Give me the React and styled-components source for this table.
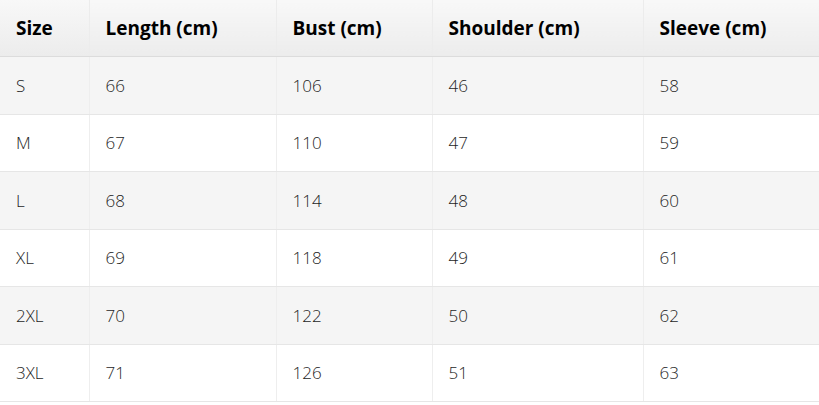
import styled, { createGlobalStyle } from "styled-components";

const GlobalStyle = createGlobalStyle`
	body {
		margin: 0;
		background: #fff;
		font-family: "Open Sans", "Noto Sans", sans-serif;
	}
`;

const Table = styled.table`
	width: 819px;
	border-collapse: collapse;
	table-layout: fixed;
`;

const HeadCell = styled.th`
	height: 56px;
	padding: 0 16px;
	text-align: left;
	font-size: 19px;
	font-weight: 700;
	color: #000;
	background: linear-gradient(to bottom, #f8f8f8, #ececec);
	border-bottom: 1px solid #dcdcdc;
	border-left: 1px solid #ececec;

	&:first-child {
		border-left: none;
	}
`;

const Row = styled.tr`
	background: ${(props) => (props.$striped ? "#f5f5f5" : "#fff")};
`;

const Cell = styled.td`
	height: 56.5px;
	padding: 0 16px;
	font-size: 17px;
	font-weight: 300;
	color: #1e1e1e;
	border-bottom: 1px solid #e6e6e6;
	border-left: 1px solid #eeeeee;

	&:first-child {
		border-left: none;
	}
`;

const columns = [
	{ label: "Size", width: 89 },
	{ label: "Length (cm)", width: 187 },
	{ label: "Bust (cm)", width: 156 },
	{ label: "Shoulder (cm)", width: 211 },
	{ label: "Sleeve (cm)", width: 176 },
];

const rows = [
	["S", 66, 106, 46, 58],
	["M", 67, 110, 47, 59],
	["L", 68, 114, 48, 60],
	["XL", 69, 118, 49, 61],
	["2XL", 70, 122, 50, 62],
	["3XL", 71, 126, 51, 63],
];

const App = () => {
	return (
		<>
			<GlobalStyle />
			<Table>
				<colgroup>
					{columns.map((c) => (
						<col key={c.label} style={{ width: c.width }} />
					))}
				</colgroup>
				<thead>
					<tr>
						{columns.map((c) => (
							<HeadCell key={c.label}>{c.label}</HeadCell>
						))}
					</tr>
				</thead>
				<tbody>
					{rows.map((r, i) => (
						<Row key={r[0]} $striped={i % 2 === 0}>
							{r.map((v, j) => (
								<Cell key={j}>{v}</Cell>
							))}
						</Row>
					))}
				</tbody>
			</Table>
		</>
	);
};

export default App;
